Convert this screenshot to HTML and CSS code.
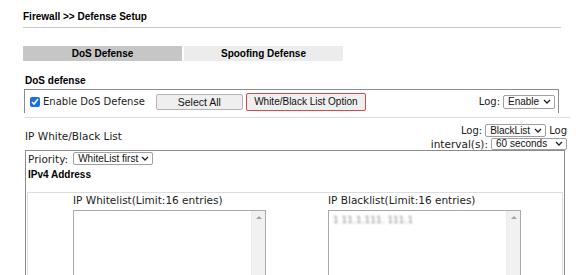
FILE: index.html
```html
<!DOCTYPE html>
<html>
<head>
<meta charset="utf-8">
<link rel="stylesheet" href="styles.css">
</head>
<body>
<div class="page">
  <div class="title">Firewall &gt;&gt; Defense Setup</div>
  <div class="rule"></div>
  <div class="tabs">
    <div class="tab active">DoS Defense</div>
    <div class="tab">Spoofing Defense</div>
  </div>
  <div class="section-title">DoS defense</div>
  <div class="dos-box">
    <label class="enable"><input type="checkbox" class="chk" checked> Enable DoS Defense</label>
    <button class="btn select-all">Select All</button>
    <button class="btn wb-option">White/Black List Option</button>
    <span class="grow"></span>
    <span class="log">Log:
      <span class="sel sel-enable">Enable<svg class="chev" width="8" height="5" viewBox="0 0 8 5"><polyline points="1,1 4,4 7,1" fill="none" stroke="#222" stroke-width="1.3"/></svg></span>
    </span>
  </div>
  <div class="sep"></div>
  <div class="wb-head">
    <span class="wb-title">IP White/Black List</span>
    <div class="wb-right">
      <div class="wb-line"><span class="small">Log:</span>
        <span class="sel sel-black">BlackList<svg class="chev" width="8" height="5" viewBox="0 0 8 5"><polyline points="1,1 4,4 7,1" fill="none" stroke="#222" stroke-width="1.3"/></svg></span>
        <span class="small">Log</span></div>
      <div class="wb-line">interval(s):
        <span class="sel sel-int">60 seconds<svg class="chev" width="8" height="5" viewBox="0 0 8 5"><polyline points="1,1 4,4 7,1" fill="none" stroke="#222" stroke-width="1.3"/></svg></span></div>
    </div>
  </div>
  <div class="wb-box">
    <div class="priority">Priority:
      <span class="sel sel-prio">WhiteList first<svg class="chev" width="8" height="5" viewBox="0 0 8 5"><polyline points="1,1 4,4 7,1" fill="none" stroke="#222" stroke-width="1.3"/></svg></span></div>
    <div class="ipv4">IPv4 Address</div>
    <div class="lists">
      <div class="list-col">
        <div class="list-label">IP Whitelist(Limit:16 entries)</div>
        <div class="listbox">
          <div class="list-content"></div>
          <div class="scroll"><span class="arrow"></span></div>
        </div>
      </div>
      <div class="list-col">
        <div class="list-label">IP Blacklist(Limit:16 entries)</div>
        <div class="listbox">
          <div class="list-content"><span class="blur">1 11.1.111. 111.1</span></div>
          <div class="scroll"><span class="arrow"></span></div>
        </div>
      </div>
    </div>
  </div>
</div>
</body>
</html>
```
FILE: styles.css
```css
* { box-sizing: border-box; }
html, body { margin: 0; padding: 0; background: #fff; }
body { font-family: "Liberation Sans", Arial, sans-serif; color: #000; overflow: hidden; height: 275px; }
.page { padding: 10px 0 0 23px; width: 576px; }
.title { font-weight: bold; font-size: 10px; line-height: 13px; height: 17px; color: #000; }
.rule { width: 538px; height: 1px; background: #c8c8c8; }
.tabs { display: flex; gap: 2px; margin-top: 18px; }
.tab { width: 159px; height: 15px; font-size: 10px; font-weight: bold; line-height: 15px; text-align: center; background: #ececec; color: #000; }
.tab.active { background: #c6c6c6; }
.section-title { font-weight: bold; font-size: 10px; line-height: 13px; margin: 13px 0 0 2px; color: #000; }
.dos-box { display: flex; align-items: center; margin: 2px 0 0 1px; width: 535px; height: 24px; border: 1px solid #8c8c8c; border-bottom: none; padding: 0 3px 0 5px; }
.enable { font-family: "DejaVu Sans", Verdana, sans-serif; font-size: 10px; display: flex; align-items: center; gap: 3px; color: #222; }
.chk { width: 10px; height: 10px; margin: 0; accent-color: #1a6ee8; }
.btn { font-family: "Liberation Sans", Arial, sans-serif; font-size: 10.5px; height: 16px; padding: 0; background: #efefef; border: 1px solid #b4b4b4; border-radius: 2px; color: #111; }
.select-all { width: 87px; margin-left: 11px; }
.wb-option { width: 120px; height: 18px; margin-left: 3px; border-color: #d24a4a; font-size: 10px; }
.grow { flex: 1; }
.log { font-family: "DejaVu Sans", Verdana, sans-serif; font-size: 10px; color: #222; display: flex; align-items: center; gap: 3px; }
.sel { display: inline-flex; align-items: center; justify-content: space-between; font-family: "Liberation Sans", Arial, sans-serif; font-size: 10px; height: 14px; padding: 0 3px 0 4px; border: 1px solid #a0a0a0; border-radius: 2px; background: #fff; color: #111; }
.chev { flex: none; }
.sel-enable { width: 52px; }
.sep { width: 546px; height: 1px; background: #dedede; margin: 4px 0 0 1px; }
.wb-head { display: flex; justify-content: space-between; align-items: flex-end; width: 542px; margin-left: 2px; margin-top: 6px; }
.wb-title { font-family: "DejaVu Sans", Verdana, sans-serif; font-size: 10.5px; color: #222; padding-bottom: 8px; }
.wb-right { font-family: "DejaVu Sans", Verdana, sans-serif; font-size: 10.5px; color: #222; display: flex; flex-direction: column; align-items: flex-end; }
.wb-line { display: flex; align-items: center; gap: 3px; height: 13px; }
.small { font-size: 10px; }
.sel-black { width: 61px; height: 13px; }
.sel-int { width: 76px; height: 12px; }
.wb-box { width: 540px; height: 130px; margin: 0 0 0 2px; border: 1px solid #8c8c8c; border-bottom: none; padding: 0 1px; }
.priority { font-family: "DejaVu Sans", Verdana, sans-serif; font-size: 10.5px; color: #222; display: flex; align-items: center; gap: 5px; height: 15px; padding-left: 1px; }
.sel-prio { width: 80px; height: 13px; }
.ipv4 { font-weight: bold; font-size: 10px; line-height: 13px; margin-top: 2px; padding-left: 1px; color: #000; }
.lists { display: flex; border: 1px solid #dcdcdc; border-bottom: none; margin-top: 11px; height: 90px; padding: 1px 0 0 45px; gap: 62px; }
.list-col { width: 193px; }
.list-label { font-family: "DejaVu Sans", Verdana, sans-serif; font-size: 10.5px; line-height: 13px; color: #222; }
.listbox { display: flex; margin-top: 3px; height: 80px; border: 1px solid #a9a9a9; border-bottom: none; }
.list-content { flex: 1; padding: 2px 4px; line-height: 10px; }
.blur { font-family: "DejaVu Sans", sans-serif; font-size: 9px; color: #888; filter: blur(1.2px); }
.scroll { width: 14px; background: #f1f1f1; border-left: 1px solid #ececec; display: flex; justify-content: center; padding-top: 5px; }
.arrow { width: 0; height: 0; border-left: 3px solid transparent; border-right: 3px solid transparent; border-bottom: 3px solid #a3a3a3; }
```
